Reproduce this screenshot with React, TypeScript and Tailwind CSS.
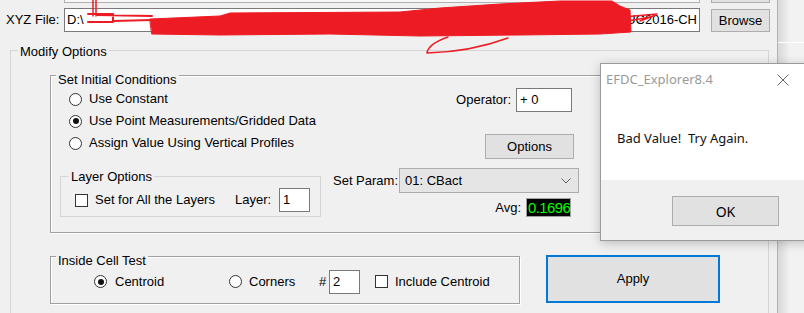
import type { ReactNode } from 'react';

function Radio({ checked = false }: { checked?: boolean }) {
  return (
    <span className="flex h-[13px] w-[13px] shrink-0 items-center justify-center rounded-full border border-[#333333] bg-white">
      {checked && <span className="h-[6px] w-[6px] rounded-full bg-[#111111]" />}
    </span>
  );
}

function Checkbox() {
  return <span className="h-[13px] w-[13px] shrink-0 border border-[#333333] bg-white" />;
}

interface GroupBoxProps {
  label: string;
  className: string;
  labelClassName: string;
  children: ReactNode;
}

function GroupBox({ label, className, labelClassName, children }: GroupBoxProps) {
  return (
    <div className={`border ${className}`}>
      <div className={`w-fit bg-[#f0f0f0] px-[2px] leading-[15px] ${labelClassName}`}>{label}</div>
      {children}
    </div>
  );
}

function Scribble() {
  return (
    <svg
      className="pointer-events-none absolute left-0 top-0"
      width="804"
      height="60"
      viewBox="0 0 804 60"
      fill="none"
    >
      <g stroke="#ed1c24" strokeLinecap="round" strokeLinejoin="round">
        <path d="M93 0V16M96 0V16" strokeWidth="1.5" />
        <path d="M88 14H113V22H88M97 15L152 16M113 21L152 20" strokeWidth="2" />
        <path
          d="M150 19L220 16L230 13L400 12L440 8L500 4L560 1L612 1L620 6L630 10L631 32L600 34L520 35L420 36L330 34L220 35L152 34Z"
          fill="#ed1c24"
          strokeWidth="1"
        />
        <path d="M600 19L657 14M612 24L650 17M640 21L656 15" strokeWidth="1.5" />
        <path d="M448 37Q428 44 427 53Q470 52 508 38" strokeWidth="1.5" />
      </g>
    </svg>
  );
}

function MessageBox() {
  return (
    <div className="absolute left-[600px] top-[63px] flex h-[178px] w-[215px] flex-col border border-[#9a9a9a] bg-white font-['Noto_Sans',sans-serif] shadow-[0_2px_10px_rgba(0,0,0,0.22)]">
      <div className="flex h-[32px] items-center justify-between pl-[5px]">
        <span className="text-[13px] text-[#999999]">EFDC_Explorer8.4</span>
        <svg className="mr-[25px]" width="12" height="12" viewBox="0 0 12 12">
          <path d="M0.5 0.5L11.5 11.5M11.5 0.5L0.5 11.5" stroke="#666666" strokeWidth="1" />
        </svg>
      </div>
      <div className="h-[84px] whitespace-pre pl-[16px] pt-[33px] text-[13px] leading-[18px] text-[#111111]">
        {'Bad Value!  Try Again.'}
      </div>
      <div className="h-[60px] bg-[#f0f0f0] pl-[71px] pt-[16px]">
        <button
          type="button"
          className="h-[30px] w-[107px] border border-[#adadad] bg-[#e1e1e1] text-[14px] text-black"
        >
          OK
        </button>
      </div>
    </div>
  );
}

export default function App() {
  return (
    <div className="relative flex h-[313px] w-[804px] overflow-hidden bg-[#f0f0f0] font-['Liberation_Sans',Arial,sans-serif] text-[13px] text-black">
      <div className="w-[778px] shrink-0 border-r border-[#b4b4b4]">
        <div className="flex h-[3px]">
          <div className="ml-[64px] w-[636px] border-x border-b border-[#b0b0b0] bg-[#f7f7f7]" />
          <div className="ml-[11px] w-[59px] border-x border-b border-[#adadad] bg-[#e1e1e1]" />
        </div>

        <div className="mt-[5px] flex h-[24px] items-center">
          <span className="ml-[6px] w-[58px]">XYZ File:</span>
          <div className="flex h-[24px] w-[636px] items-center justify-between border border-[#7a7a7a] bg-white px-[2px]">
            <span>D:\</span>
            <span>UC2016-CH</span>
          </div>
          <button
            type="button"
            className="ml-[11px] mt-[1px] h-[23px] w-[59px] self-start border border-[#adadad] bg-[#e1e1e1]"
          >
            Browse
          </button>
        </div>

        <GroupBox
          label="Modify Options"
          className="ml-[10px] mt-[18px] h-[300px] w-[759px] border-[#d5d5d5]"
          labelClassName="-mt-[7px] ml-[7px]"
        >
          <GroupBox
            label="Set Initial Conditions"
            className="ml-[39px] mt-[16px] w-[696px] border-[#a0a0a0] pb-[14px] shadow-[inset_1px_1px_0_#fff,1px_1px_0_#fff]"
            labelClassName="-mt-[4px] ml-[5px]"
          >
            <div className="mt-[1px] flex w-[523px] items-start">
              <div className="flex flex-col pl-[18px]">
                <label className="flex h-[22px] items-center gap-[7px]">
                  <Radio />
                  Use Constant
                </label>
                <label className="flex h-[22px] items-center gap-[7px]">
                  <Radio checked />
                  Use Point Measurements/Gridded Data
                </label>
                <label className="flex h-[22px] items-center gap-[7px]">
                  <Radio />
                  Assign Value Using Vertical Profiles
                </label>
              </div>
              <div className="ml-auto flex flex-col items-end">
                <div className="mr-[2px] flex items-center">
                  <span className="mr-[5px]">Operator:</span>
                  <div className="flex h-[24px] w-[56px] items-center border border-[#7a7a7a] bg-white pl-[3px]">
                    + 0
                  </div>
                </div>
                <button
                  type="button"
                  className="mt-[22px] h-[25px] w-[89px] border border-[#adadad] bg-[#e1e1e1]"
                >
                  Options
                </button>
              </div>
            </div>

            <div className="flex items-start">
              <GroupBox
                label="Layer Options"
                className="ml-[9px] mt-[17px] w-[261px] border-[#d5d5d5] pb-[4px]"
                labelClassName="-mt-[8px] ml-[8px]"
              >
                <div className="mt-[4px] flex h-[24px] items-center">
                  <label className="ml-[14px] flex w-[160px] items-center gap-[7px]">
                    <Checkbox />
                    Set for All the Layers
                  </label>
                  <span className="w-[44px]">Layer:</span>
                  <div className="flex h-[24px] w-[31px] items-center border border-[#7a7a7a] bg-white pl-[3px]">
                    1
                  </div>
                </div>
              </GroupBox>

              <div className="ml-[12px] mt-[9px] flex flex-col">
                <div className="flex items-center">
                  <span className="w-[66px]">Set Param:</span>
                  <div className="flex h-[25px] w-[180px] items-center justify-between border border-[#acacac] bg-[#e5e5e5] pl-[5px] pr-[7px]">
                    <span>01: CBact</span>
                    <svg width="10" height="6" viewBox="0 0 10 6" fill="none">
                      <path d="M0.5 0.5L5 5L9.5 0.5" stroke="#606060" strokeWidth="1" />
                    </svg>
                  </div>
                </div>
                <div className="mr-[8px] mt-[5px] flex items-center justify-end">
                  <span className="mr-[5px]">Avg:</span>
                  <div className="flex h-[19px] w-[45px] items-center overflow-hidden border border-[#a0a0a0] bg-black pl-[1px] text-[15px] tracking-[-0.6px] text-[#00ff00]">
                    0.1696
                  </div>
                </div>
              </div>
            </div>
          </GroupBox>

          <div className="mt-[22px] flex items-start">
            <GroupBox
              label="Inside Cell Test"
              className="ml-[39px] mt-[1px] w-[470px] border-[#a0a0a0] pb-[9px] shadow-[inset_1px_1px_0_#fff,1px_1px_0_#fff]"
              labelClassName="-mt-[4px] ml-[5px]"
            >
              <div className="mt-[2px] flex h-[24px] items-center">
                <label className="ml-[43px] flex w-[135px] items-center gap-[8px]">
                  <Radio checked />
                  Centroid
                </label>
                <label className="flex w-[90px] items-center gap-[7px]">
                  <Radio />
                  Corners
                </label>
                <span className="w-[10px]">#</span>
                <div className="flex h-[24px] w-[31px] items-center border border-[#7a7a7a] bg-white pl-[3px]">
                  2
                </div>
                <label className="ml-[15px] flex items-center gap-[7px]">
                  <Checkbox />
                  Include Centroid
                </label>
              </div>
            </GroupBox>
            <button
              type="button"
              className="ml-[26px] h-[48px] w-[174px] border-2 border-[#0078d7] bg-[#e1e1e1]"
            >
              Apply
            </button>
          </div>
        </GroupBox>
      </div>

      <div className="flex-1 bg-[linear-gradient(to_right,#d8d8d8,#f2f2f2_12px)]">
        <div className="mt-[42px] border-t border-white" />
      </div>

      <Scribble />
      <MessageBox />
    </div>
  );
}
